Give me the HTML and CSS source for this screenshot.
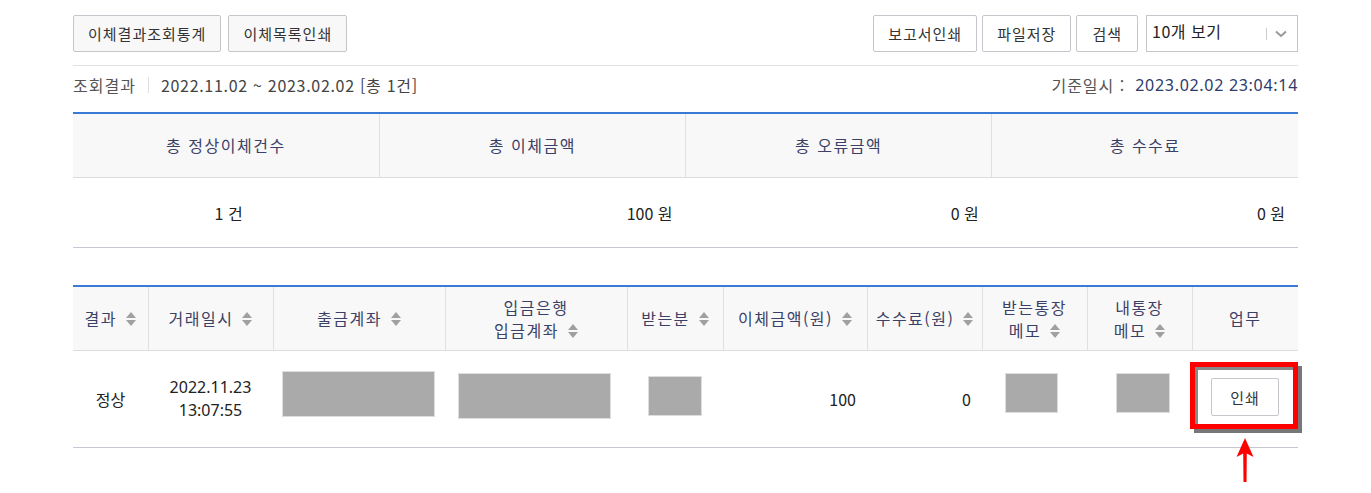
FILE: index.html
```html
<!DOCTYPE html>
<html lang="ko">
<head>
  <meta charset="UTF-8" />
  <meta name="viewport" content="width=device-width, initial-scale=1.0"/>
  <title>이체결과조회</title>
  <link rel="stylesheet" href="styles.css">
</head>
<body>
  <div class="container">
    <div class="toolbar">
      <div class="btn-group">
        <button class="btn">이체결과조회통계</button>
        <button class="btn">이체목록인쇄</button>
      </div>
      <div class="btn-group">
        <button class="btn">보고서인쇄</button>
        <button class="btn">파일저장</button>
        <button class="btn btn-search">검색</button>
        <div class="select">
          <span class="select-text">10개 보기</span>
          <span class="select-bar"></span>
          <svg class="select-arrow" width="12" height="8" viewBox="0 0 12 8"><path d="M1 1.5 L6 6 L11 1.5" fill="none" stroke="#999" stroke-width="2"/></svg>
        </div>
      </div>
    </div>

    <div class="info">
      <div class="info-left">
        <span class="label">조회결과</span>
        <span class="divider"></span>
        <span class="period">2022.11.02 ~ 2023.02.02 [총 1건]</span>
      </div>
      <div class="info-right">
        <span class="label">기준일시 :</span>
        <span class="stamp latin">2023.02.02 23:04:14</span>
      </div>
    </div>

    <table class="summary">
      <thead>
        <tr>
          <th>총 정상이체건수</th>
          <th>총 이체금액</th>
          <th>총 오류금액</th>
          <th>총 수수료</th>
        </tr>
      </thead>
      <tbody>
        <tr>
          <td class="center">1 건</td>
          <td class="right">100 원</td>
          <td class="right">0 원</td>
          <td class="right">0 원</td>
        </tr>
      </tbody>
    </table>

    <table class="list">
      <colgroup>
        <col style="width:75px"><col style="width:125px"><col style="width:172px"><col style="width:182px">
        <col style="width:96px"><col style="width:144px"><col style="width:115px"><col style="width:105px">
        <col style="width:105px"><col style="width:106px">
      </colgroup>
      <thead>
        <tr>
          <th>결과 <i class="sort"></i></th>
          <th>거래일시 <i class="sort"></i></th>
          <th>출금계좌 <i class="sort"></i></th>
          <th>입금은행<br>입금계좌 <i class="sort"></i></th>
          <th>받는분 <i class="sort"></i></th>
          <th>이체금액(원) <i class="sort"></i></th>
          <th>수수료(원) <i class="sort"></i></th>
          <th>받는통장<br>메모 <i class="sort"></i></th>
          <th>내통장<br>메모 <i class="sort"></i></th>
          <th>업무</th>
        </tr>
      </thead>
      <tbody>
        <tr>
          <td class="center">정상</td>
          <td class="center latin">2022.11.23<br>13:07:55</td>
          <td><div class="mask mask-acc1"></div></td>
          <td><div class="mask mask-acc2"></div></td>
          <td><div class="mask mask-name"></div></td>
          <td class="right num">100</td>
          <td class="right num">0</td>
          <td><div class="mask mask-memo1"></div></td>
          <td><div class="mask mask-memo2"></div></td>
          <td>
            <div class="highlight">
              <button class="btn btn-print">인쇄</button>
            </div>
          </td>
        </tr>
      </tbody>
    </table>

    <div class="pointer">
      <svg width="18" height="44" viewBox="0 0 18 44"><path d="M9 0 L17.5 19 L10.8 15.5 L10.5 44 L7.5 44 L7.2 15.5 L0.5 19 Z" fill="#f00"/></svg>
    </div>
  </div>
</body>
</html>
```

FILE: styles.css
```css
body {
  margin: 0;
  padding: 0;
  background: #fff;
  font-family: "Noto Sans CJK KR", "Noto Sans", sans-serif;
  color: #333;
}
.latin {
  font-family: "Noto Sans", "Noto Sans CJK KR", sans-serif;
}
.container {
  width: 1225px;
  margin-left: 73px;
}
.toolbar {
  display: flex;
  justify-content: space-between;
  margin-top: 15px;
  padding-bottom: 13px;
  border-bottom: 1px solid #e2e2e2;
}
.btn-group {
  display: flex;
  gap: 7px;
}
.btn {
  height: 37px;
  padding: 0 14px;
  background: #f8f8f8;
  border: 1px solid #c4c6cc;
  border-radius: 2px;
  font-family: inherit;
  font-size: 15px;
  letter-spacing: 1px;
  color: #333;
  cursor: pointer;
}
.btn-group:last-child {
  gap: 5px;
}
.btn-group:last-child .btn {
  background: #fff;
}
.btn-search {
  padding: 0 15px;
}
.select {
  width: 152px;
  height: 37px;
  box-sizing: border-box;
  border: 1px solid #c4c6cc;
  display: flex;
  align-items: center;
  padding: 0 10px 0 5px;
  margin-left: 3px;
}
.select-text {
  flex-grow: 1;
  font-size: 16px;
  letter-spacing: 0.5px;
  color: #222;
  margin-top: -6px;
}
.select-bar {
  width: 1px;
  height: 12px;
  background: #ccc;
  margin-right: 8px;
}
.info {
  display: flex;
  justify-content: space-between;
  align-items: center;
  height: 38px;
  padding-bottom: 8px;
  font-size: 16px;
}
.info-left, .info-right {
  display: flex;
  align-items: center;
}
.info .label {
  color: #555;
  letter-spacing: 1px;
}
.divider {
  width: 1px;
  height: 16px;
  background: #ddd;
  margin: 0 12px;
}
.period {
  color: #444;
  letter-spacing: 0.7px;
}
.info-right .stamp {
  color: #2d3a6b;
  letter-spacing: 0.7px;
  margin-left: 10px;
}
table {
  width: 100%;
  border-collapse: collapse;
  table-layout: fixed;
  border-top: 2px solid #3a7ad5;
}
th {
  background: #f8f8f8;
  font-weight: normal;
  color: #3b4166;
  font-size: 16px;
  letter-spacing: 1.5px;
  border-bottom: 1px solid #dcdcdc;
  border-left: 1px solid #e0e0e0;
  line-height: 23px;
}
th:first-child {
  border-left: none;
}
td {
  font-size: 16px;
  color: #222;
  border-bottom: 1px solid #c6c6d6;
}
.center {
  text-align: center;
}
.right {
  text-align: right;
}
.summary th {
  height: 63px;
  padding: 0;
}
.summary td {
  height: 69px;
  padding: 0 13px 0 0;
}
.summary td.center {
  padding: 0 0 0 5px;
}
.list {
  margin-top: 37px;
}
.list th {
  height: 63px;
  padding: 0;
}
.list td {
  height: 96px;
  padding: 0;
  line-height: 23px;
}
.list td.num {
  padding-right: 11px;
}
.sort {
  display: inline-flex;
  flex-direction: column;
  gap: 2px;
  vertical-align: middle;
  margin: -3px 0 0 3px;
}
.sort::before, .sort::after {
  content: "";
  width: 0;
  height: 0;
  border-left: 5px solid transparent;
  border-right: 5px solid transparent;
}
.sort::before {
  border-bottom: 6px solid #a0a0a0;
}
.sort::after {
  border-top: 6px solid #a0a0a0;
}
.mask {
  background: #aaa;
  border: 1px solid #ddd;
}
.mask-acc1 {
  width: 151px;
  height: 44px;
  margin: -11px 0 0 9px;
}
.mask-acc2 {
  width: 151px;
  height: 44px;
  margin: -7px 0 0 13px;
}
.mask-name {
  width: 52px;
  height: 38px;
  margin: -6px 0 0 21px;
}
.mask-memo1 {
  width: 51px;
  height: 38px;
  margin: -12px 0 0 23px;
}
.mask-memo2 {
  width: 52px;
  height: 38px;
  margin: -12px 0 0 29px;
}
.highlight {
  box-sizing: border-box;
  width: 108px;
  height: 67px;
  margin: -7px 0 0 -2px;
  border: 5px solid #f00;
  box-shadow: 4px 4px 0 #777, inset 3px 3px 0 #888;
  display: flex;
  align-items: center;
  justify-content: center;
}
.btn-print {
  width: 68px;
  height: 38px;
  padding: 0;
  background: #fff;
  font-size: 15px;
  margin: 3px 0 0 2px;
}
.pointer {
  display: flex;
  justify-content: flex-end;
  margin-top: -10px;
  padding-right: 44px;
  line-height: 0;
}
```
